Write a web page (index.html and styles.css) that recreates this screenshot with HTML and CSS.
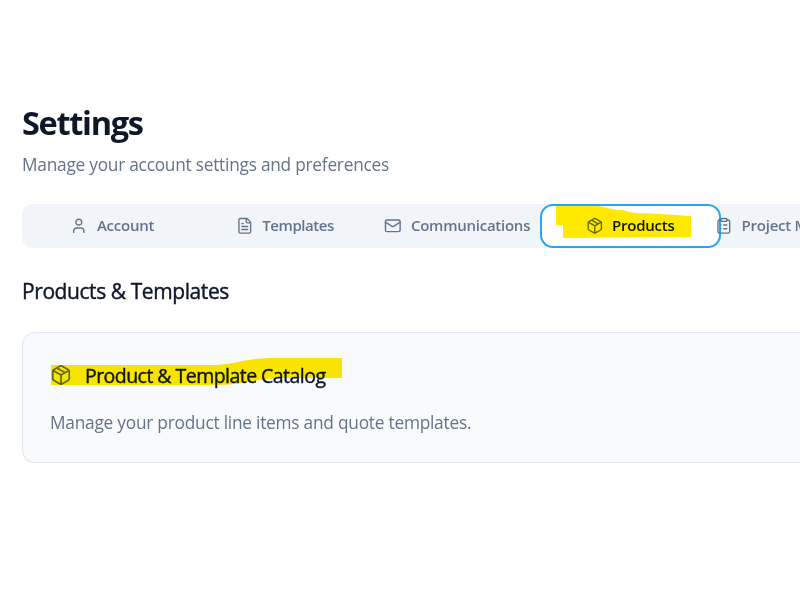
FILE: index.html
```html
<!DOCTYPE html>
<html lang="en">
<head>
<meta charset="utf-8">
<title>Settings</title>
<link rel="stylesheet" href="styles.css">
</head>
<body>
<svg class="sprite" aria-hidden="true">
  <symbol id="package" viewBox="0 0 24 24"><path d="m7.5 4.27 9 5.15M21 8a2 2 0 0 0-1-1.73l-7-4a2 2 0 0 0-2 0l-7 4A2 2 0 0 0 3 8v8a2 2 0 0 0 1 1.73l7 4a2 2 0 0 0 2 0l7-4A2 2 0 0 0 21 16ZM3.3 7l8.7 5 8.7-5M12 22V12"/></symbol>
</svg>
<main class="page">
  <h1 class="title">Settings</h1>
  <p class="subtitle">Manage your account settings and preferences</p>
  <nav class="tabs">
    <a class="tab">
      <svg class="icon" viewBox="0 0 24 24"><circle cx="12" cy="7" r="4"/><path d="M19 21v-2a4 4 0 0 0-4-4H9a4 4 0 0 0-4 4v2"/></svg>
      <span>Account</span>
    </a>
    <a class="tab">
      <svg class="icon" viewBox="0 0 24 24"><path d="M15 2H6a2 2 0 0 0-2 2v16a2 2 0 0 0 2 2h12a2 2 0 0 0 2-2V7ZM14 2v4a2 2 0 0 0 2 2h4M10 9H8M16 13H8M16 17H8"/></svg>
      <span class="tight">Templates</span>
    </a>
    <a class="tab">
      <svg class="icon" viewBox="0 0 24 24"><rect x="2" y="4" width="20" height="16" rx="2"/><path d="m22 7-8.97 5.7a1.94 1.94 0 0 1-2.06 0L2 7"/></svg>
      <span>Communications</span>
    </a>
    <a class="tab active">
      <svg class="icon"><use href="#package"/></svg>
      <span>Products</span>
      <svg class="marker marker-tab" viewBox="0 0 136 34"><path d="M0 1H43C53 3 56 5 67 5C76 9 90 8 104 9L135 11V32L7 33V20H0Z"/></svg>
    </a>
    <a class="tab last">
      <svg class="icon" viewBox="0 0 24 24"><rect x="8" y="2" width="8" height="4" rx="1"/><path d="M16 4h2a2 2 0 0 1 2 2v14a2 2 0 0 1-2 2H6a2 2 0 0 1-2-2V6a2 2 0 0 1 2-2h2M12 11h4M12 16h4M8 11h.01M8 16h.01"/></svg>
      <span>Project M</span>
    </a>
  </nav>
  <h2 class="section">Products &amp; Templates</h2>
  <section class="card">
    <h3 class="card-title">
      <svg class="icon big"><use href="#package"/></svg>
      <span>Product &amp; Template Catalog</span>
      <svg class="marker marker-card" viewBox="0 0 291 28"><path d="M0 7H165C186 6 190 1 220 0H291V20H228C205 21 190 27 168 27H0Z"/></svg>
    </h3>
    <p class="card-text">Manage your product line items and quote templates.</p>
  </section>
</main>
</body>
</html>
```

FILE: styles.css
```css
* { box-sizing: border-box; }
html { overflow: hidden; }
body {
  margin: 0;
  background: #fff;
  color: #0f172a;
  font-family: "Segoe UI", "Open Sans", "Noto Sans", sans-serif;
  overflow: hidden;
}
h1, h2, h3, p { margin: 0; white-space: nowrap; }
.sprite { position: absolute; width: 0; height: 0; }
.page { padding: 103px 0 0 22px; overflow: hidden; }
.title { font-size: 32.5px; line-height: 40px; font-weight: 700; letter-spacing: -1.3px; }
.subtitle { margin-top: 8px; font-size: 17.3px; line-height: 28px; color: #64748b; letter-spacing: -0.24px; }
.tabs {
  display: grid;
  grid-template-columns: repeat(5, 172.5px);
  width: 873px;
  margin-top: 25px;
  height: 44px;
  padding: 4px;
  border-radius: 11px;
  background: #f1f5f9;
}
.tab {
  position: relative;
  display: flex;
  align-items: center;
  justify-content: center;
  gap: 9px;
  color: #64748b;
  font-size: 15px;
  font-weight: 600;
  letter-spacing: -0.25px;
  white-space: nowrap;
}
.tab span { padding-bottom: 2px; }
.tight { letter-spacing: -0.45px; }
.icon {
  flex: none;
  width: 17.6px;
  height: 17.6px;
  fill: none;
  stroke: currentColor;
  stroke-width: 1.9;
  stroke-linecap: round;
  stroke-linejoin: round;
}
.active {
  width: 173px;
  background: #fff;
  border-radius: 9px;
  box-shadow: 0 0 0 2px #fff, 0 0 0 4px #28a5f4;
}
.active span { color: #0f172a; }
.last { justify-content: flex-start; margin-left: -1px; }
.marker { position: absolute; fill: #ffe900; mix-blend-mode: multiply; }
.marker-tab { left: 12px; top: -3px; width: 136px; height: 34px; }
.section {
  margin-top: 27px;
  font-size: 21px;
  line-height: 32px;
  font-weight: 500;
  letter-spacing: -0.42px;
  -webkit-text-stroke: 0.4px currentColor;
}
.card {
  width: 873px;
  margin-top: 25px;
  height: 131px;
  padding: 26px 27px;
  border: 1px solid #e2e8f0;
  border-radius: 13px;
  background: #f8fafc;
  box-shadow: 0 1px 2px rgba(15, 23, 42, .06);
}
.card-title {
  position: relative;
  display: flex;
  align-items: center;
  gap: 13px;
  height: 32px;
  font-size: 19.5px;
  font-weight: 500;
  letter-spacing: -0.54px;
}
.card-title span { padding-top: 1px; -webkit-text-stroke: 0.4px currentColor; }
.big { width: 22px; height: 22px; color: #64748b; }
.marker-card { left: 1px; top: -1px; width: 291px; height: 28px; }
.card-text { margin-top: 18px; font-size: 17.3px; line-height: 28px; color: #64748b; letter-spacing: -0.23px; }
```
